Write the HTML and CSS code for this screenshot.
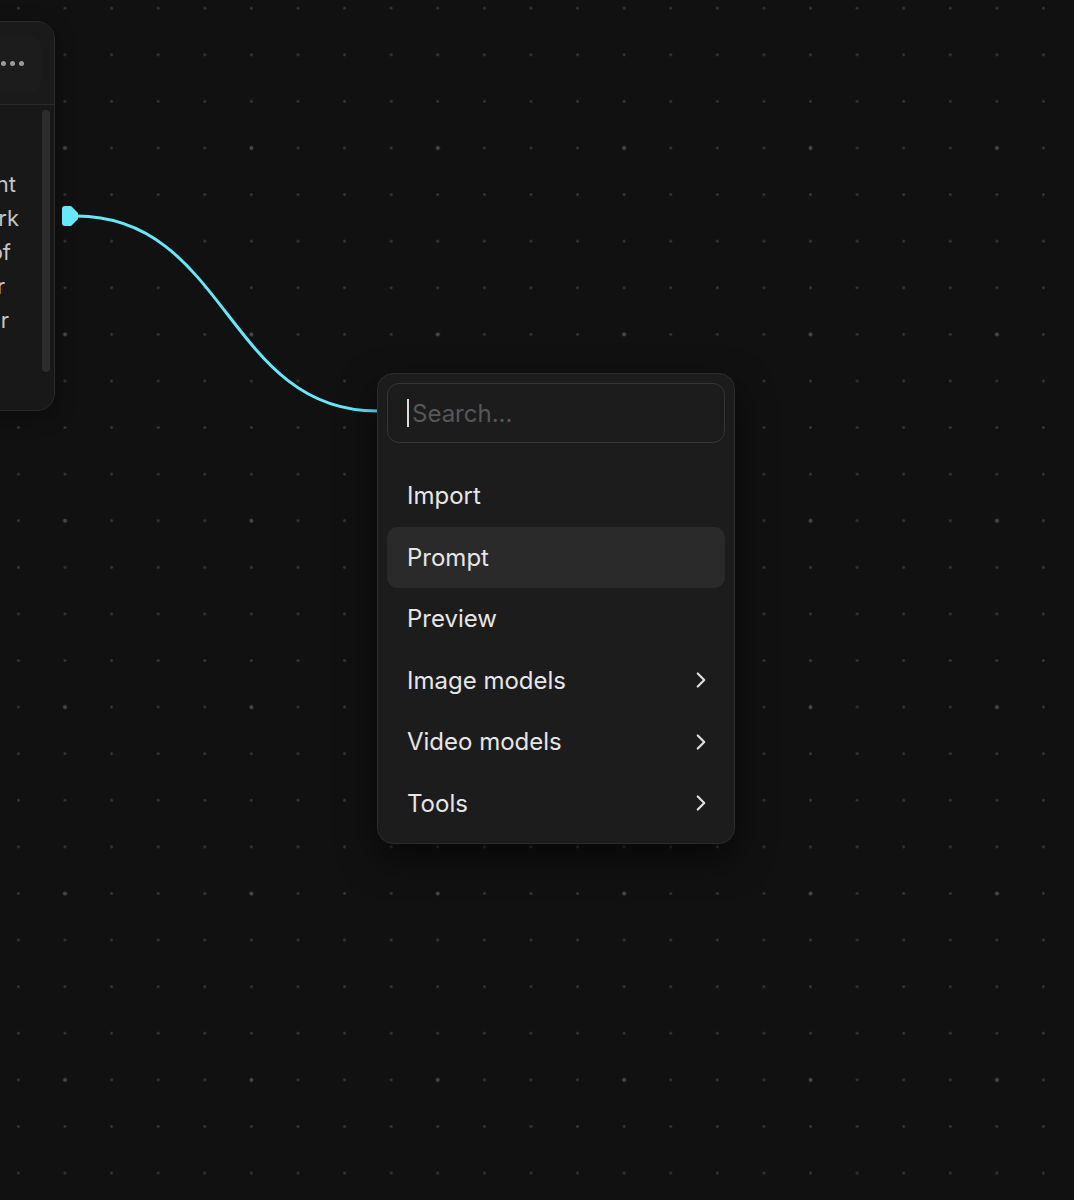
FILE: index.html
```html
<!DOCTYPE html>
<html lang="en">
<head>
    <meta charset="UTF-8">
    <meta name="viewport" content="width=device-width, initial-scale=1.0">
    <title>Flow canvas</title>
    <link rel="stylesheet" href="styles.css">
</head>
<body>
    <div class="canvas">
        <!-- prompt node, partly scrolled off the left side -->
        <div class="node">
            <div class="node-header">
                <button class="node-menu" aria-label="Node options">
                    <span></span><span></span><span></span>
                </button>
            </div>
            <div class="node-body">
                <div class="node-text">
                    <div class="line l1">in soft ambient</div>
                    <div class="line l2">painted artwork</div>
                    <div class="line l3">a sky made of</div>
                    <div class="line l4">light over</div>
                    <div class="line l5">in warm color</div>
                </div>
                <div class="scroll-thumb"></div>
            </div>
        </div>

        <!-- edge from the node output to the open picker -->
        <svg class="edge" width="1074" height="1200" viewBox="0 0 1074 1200">
            <path class="edge-line" d="M76 216 C227 216 227 411 377 411"/>
            <path class="edge-handle" d="M65 206 H71 L78 213 V219 L71 226 H65 Q62 226 62 223 V209 Q62 206 65 206 Z"/>
        </svg>

        <!-- node picker -->
        <div class="picker">
            <div class="search">
                <span class="caret"></span>
                <input type="text" placeholder="Search...">
            </div>
            <ul class="picker-list">
                <li class="picker-item">Import</li>
                <li class="picker-item active">Prompt</li>
                <li class="picker-item">Preview</li>
                <li class="picker-item">Image models
                    <svg class="chevron" viewBox="0 0 24 24"><path d="m9 18 6-6-6-6"/></svg>
                </li>
                <li class="picker-item">Video models
                    <svg class="chevron" viewBox="0 0 24 24"><path d="m9 18 6-6-6-6"/></svg>
                </li>
                <li class="picker-item">Tools
                    <svg class="chevron" viewBox="0 0 24 24"><path d="m9 18 6-6-6-6"/></svg>
                </li>
            </ul>
        </div>
    </div>
</body>
</html>
```

FILE: styles.css
```css
* {
    margin: 0;
    padding: 0;
    box-sizing: border-box;
}

body {
    font-family: 'Inter', 'Noto Sans', sans-serif;
    background: #111111;
    color: #e6e6e6;
    overflow: hidden;
}

.canvas {
    position: relative;
    width: 1074px;
    height: 1200px;
    overflow: hidden;
    background-color: #111111;
    /* major dots every 4 cells, minor dots on every cell */
    background-image:
        radial-gradient(circle, #474747 0, #474747 1.7px, transparent 2.3px),
        radial-gradient(circle, #353535 0, #353535 1.1px, transparent 1.7px);
    background-size: 186.4px 186.4px, 46.6px 46.6px;
    background-position: -28.2px 54.8px, -4.9px -15.1px;
}

/* ---------- node ---------- */

.node {
    position: absolute;
    left: -300px;
    top: 21px;
    width: 355px;
    height: 390px;
    background: #181818;
    border: 1px solid #2a2a2a;
    border-radius: 18px;
    box-shadow: 0 6px 20px rgba(0, 0, 0, 0.35);
    overflow: hidden;
}

.node-header {
    height: 83px;
    border-bottom: 1px solid #2a2a2a;
    background: #1a1a1a;
    display: flex;
    justify-content: flex-end;
    align-items: center;
    padding-right: 13px;
}

.node-menu {
    width: 70px;
    height: 58px;
    border: none;
    border-radius: 12px;
    background: #1c1c1c;
    display: flex;
    justify-content: flex-end;
    align-items: center;
    gap: 4px;
    padding-right: 17px;
    margin-top: 1px;
}

.node-menu span {
    width: 5px;
    height: 5px;
    border-radius: 50%;
    background: #9b9b9b;
}

.node-body {
    position: relative;
    height: 305px;
}

.node-text {
    position: absolute;
    right: 34px;
    top: 62px;
    font-size: 22px;
    line-height: 34px;
    color: #c4c4c4;
    text-align: right;
    white-space: nowrap;
}

.line.l1 { padding-right: 4px; }
.line.l2 { padding-right: 1px; }
.line.l3 { padding-right: 9px; }
.line.l4 { padding-right: 15px; }
.line.l5 { padding-right: 11px; }

.scroll-thumb {
    position: absolute;
    right: 4px;
    top: 5px;
    width: 8px;
    height: 262px;
    border-radius: 4px;
    background: #2d2d2d;
}

/* ---------- edge ---------- */

.edge {
    position: absolute;
    left: 0;
    top: 0;
    pointer-events: none;
}

.edge-line {
    fill: none;
    stroke: #67e8f9;
    stroke-width: 3;
}

.edge-handle {
    fill: #67e8f9;
}

/* ---------- picker ---------- */

.picker {
    position: absolute;
    left: 377px;
    top: 373px;
    width: 358px;
    padding: 9px;
    background: #1c1c1c;
    border: 1px solid #2c2c2c;
    border-radius: 16px;
    box-shadow: 0 14px 36px rgba(0, 0, 0, 0.55);
}

.search {
    height: 60px;
    border: 1px solid #363636;
    border-radius: 12px;
    display: flex;
    align-items: center;
    padding-left: 19px;
    margin-bottom: 22px;
}

.caret {
    width: 2px;
    height: 28px;
    background: #dcdcdc;
    margin-right: 3px;
}

.search input {
    flex: 1;
    min-width: 0;
    border: none;
    outline: none;
    background: transparent;
    font-family: inherit;
    font-size: 24px;
    color: #e6e6e6;
}

.search input::placeholder {
    color: #575757;
}

.picker-list {
    list-style: none;
}

.picker-item {
    height: 61.5px;
    display: flex;
    align-items: center;
    justify-content: space-between;
    padding: 0 11px 0 20px;
    border-radius: 11px;
    font-size: 24px;
    color: #e6e6e6;
}

.picker-item.active {
    background: #2a2a2a;
}

.chevron {
    width: 26px;
    height: 26px;
    fill: none;
    stroke: #e0e0e0;
    stroke-width: 2;
    stroke-linecap: round;
    stroke-linejoin: round;
}
```
